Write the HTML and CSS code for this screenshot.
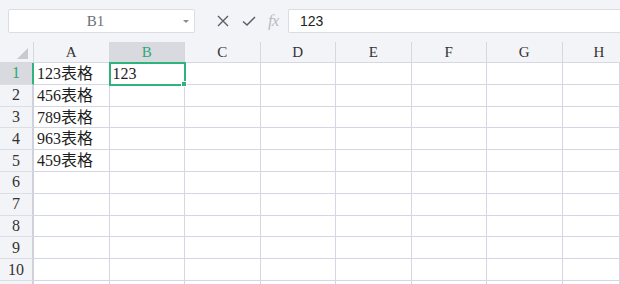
FILE: index.html
```html
<!DOCTYPE html>
<html lang="zh-CN">
<head>
    <meta charset="UTF-8">
    <title>表格</title>
    <link rel="stylesheet" href="styles.css">
</head>
<body>
    <div class="sheet">
        <!-- Formula bar -->
        <div class="formula-bar">
            <div class="name-box">
                <span class="name-text">B1</span>
                <span class="caret"></span>
            </div>
            <div class="bar-icons">
                <svg class="icon" width="14" height="14" viewBox="0 0 14 14"><path d="M2 2 L12 12 M12 2 L2 12" stroke="#5b5e66" stroke-width="1.4" fill="none"/></svg>
                <svg class="icon" width="16" height="14" viewBox="0 0 16 14"><path d="M2 7.5 L6 11 L14 3" stroke="#5b5e66" stroke-width="1.5" fill="none"/></svg>
                <span class="fx">fx</span>
            </div>
            <div class="formula-input">123</div>
        </div>

        <!-- Grid -->
        <div class="grid-wrap">
            <div class="grid">
                <div class="corner"><span class="corner-mark"></span></div>
                <div class="col-head">A</div>
                <div class="col-head active">B</div>
                <div class="col-head">C</div>
                <div class="col-head">D</div>
                <div class="col-head">E</div>
                <div class="col-head">F</div>
                <div class="col-head">G</div>
                <div class="col-head last">H</div>

                <div class="row-head active">1</div>
                <div class="cell">123表格</div>
                <div class="cell selected">123<span class="handle"></span></div>
                <div class="cell"></div><div class="cell"></div><div class="cell"></div><div class="cell"></div><div class="cell"></div><div class="cell"></div>

                <div class="row-head">2</div>
                <div class="cell">456表格</div>
                <div class="cell"></div><div class="cell"></div><div class="cell"></div><div class="cell"></div><div class="cell"></div><div class="cell"></div><div class="cell"></div>

                <div class="row-head">3</div>
                <div class="cell">789表格</div>
                <div class="cell"></div><div class="cell"></div><div class="cell"></div><div class="cell"></div><div class="cell"></div><div class="cell"></div><div class="cell"></div>

                <div class="row-head">4</div>
                <div class="cell">963表格</div>
                <div class="cell"></div><div class="cell"></div><div class="cell"></div><div class="cell"></div><div class="cell"></div><div class="cell"></div><div class="cell"></div>

                <div class="row-head">5</div>
                <div class="cell">459表格</div>
                <div class="cell"></div><div class="cell"></div><div class="cell"></div><div class="cell"></div><div class="cell"></div><div class="cell"></div><div class="cell"></div>

                <div class="row-head">6</div>
                <div class="cell"></div><div class="cell"></div><div class="cell"></div><div class="cell"></div><div class="cell"></div><div class="cell"></div><div class="cell"></div><div class="cell"></div>

                <div class="row-head">7</div>
                <div class="cell"></div><div class="cell"></div><div class="cell"></div><div class="cell"></div><div class="cell"></div><div class="cell"></div><div class="cell"></div><div class="cell"></div>

                <div class="row-head">8</div>
                <div class="cell"></div><div class="cell"></div><div class="cell"></div><div class="cell"></div><div class="cell"></div><div class="cell"></div><div class="cell"></div><div class="cell"></div>

                <div class="row-head">9</div>
                <div class="cell"></div><div class="cell"></div><div class="cell"></div><div class="cell"></div><div class="cell"></div><div class="cell"></div><div class="cell"></div><div class="cell"></div>

                <div class="row-head">10</div>
                <div class="cell"></div><div class="cell"></div><div class="cell"></div><div class="cell"></div><div class="cell"></div><div class="cell"></div><div class="cell"></div><div class="cell"></div>

                <div class="row-head"></div>
                <div class="cell"></div><div class="cell"></div><div class="cell"></div><div class="cell"></div><div class="cell"></div><div class="cell"></div><div class="cell"></div><div class="cell"></div>
            </div>
        </div>
    </div>
</body>
</html>
```

FILE: styles.css
```css
* {
    margin: 0;
    padding: 0;
    box-sizing: border-box;
}

body {
    background: #f3f4f7;
    font-family: 'Liberation Serif', 'Noto Sans CJK SC', serif;
    color: #222;
    width: 620px;
    height: 284px;
    overflow: hidden;
}

.sheet {
    width: 620px;
}

/* Formula Bar */
.formula-bar {
    display: flex;
    align-items: center;
    height: 42px;
    padding: 0 0 0 8px;
}

.name-box {
    position: relative;
    width: 187px;
    height: 24px;
    background: #fff;
    border: 1px solid #dcdde2;
    border-radius: 2px;
    display: flex;
    align-items: center;
    justify-content: center;
}

.name-text {
    font-size: 15px;
    color: #6b6e75;
    margin-right: 12px;
}

.caret {
    position: absolute;
    right: 5px;
    top: 10px;
    border-left: 3px solid transparent;
    border-right: 3px solid transparent;
    border-top: 3px solid #888b92;
}

.bar-icons {
    display: flex;
    align-items: center;
    gap: 11px;
    margin-left: 21px;
    width: 72px;
}

.icon {
    display: block;
}

.fx {
    font-family: 'Liberation Serif', serif;
    font-style: italic;
    font-size: 17px;
    color: #b9bcc2;
    letter-spacing: -1px;
}

.formula-input {
    flex: 1;
    height: 24px;
    background: #fff;
    border: 1px solid #dcdde2;
    border-right: none;
    border-radius: 2px 0 0 2px;
    padding-left: 11px;
    font-family: 'Liberation Sans', sans-serif;
    font-size: 14px;
    line-height: 22px;
    color: #222;
}

/* Grid */
.grid-wrap {
    height: 242px;
    overflow: hidden;
}

.grid {
    display: grid;
    grid-template-columns: 34px repeat(7, 75.5px) 1fr;
    grid-template-rows: 21px repeat(11, 21.8px);
}

.corner {
    position: relative;
    border-right: 1px solid #d6d8e0;
    border-bottom: 1px solid #d6d8e0;
}

.corner-mark {
    position: absolute;
    right: 5px;
    bottom: 3px;
    width: 0;
    height: 0;
    border-left: 11px solid transparent;
    border-bottom: 11px solid #c9cacf;
}

.col-head {
    display: flex;
    align-items: center;
    justify-content: center;
    font-size: 15px;
    color: #333;
    border-right: 1px solid #d6d8e0;
    border-bottom: 1px solid #d6d8e0;
}

.col-head.last {
    justify-content: flex-start;
    padding-left: 31px;
    border-right: none;
}

.col-head.active {
    background: #d8dae0;
    color: #2ea872;
}

.row-head {
    display: flex;
    align-items: center;
    justify-content: center;
    font-size: 16px;
    color: #333;
    border-right: 2px solid #cfd2dc;
    border-bottom: 1px solid #dcdee6;
}

.row-head.active {
    background: #d8dae0;
    color: #2ea872;
    border-right-color: #2fb37c;
}

.cell {
    position: relative;
    background: #fff;
    border-right: 1px solid #d4d6e4;
    border-bottom: 1px solid #d4d6e4;
    padding-left: 3px;
    font-size: 16px;
    line-height: 22px;
    white-space: nowrap;
    color: #1e1e1e;
}

.cell.selected {
    outline: 2px solid #2fb37c;
    outline-offset: -1px;
    z-index: 1;
}

.handle {
    position: absolute;
    right: -3px;
    bottom: -3px;
    width: 4px;
    height: 4px;
    background: #2fb37c;
    border: 1px solid #fff;
    box-sizing: content-box;
}
```
